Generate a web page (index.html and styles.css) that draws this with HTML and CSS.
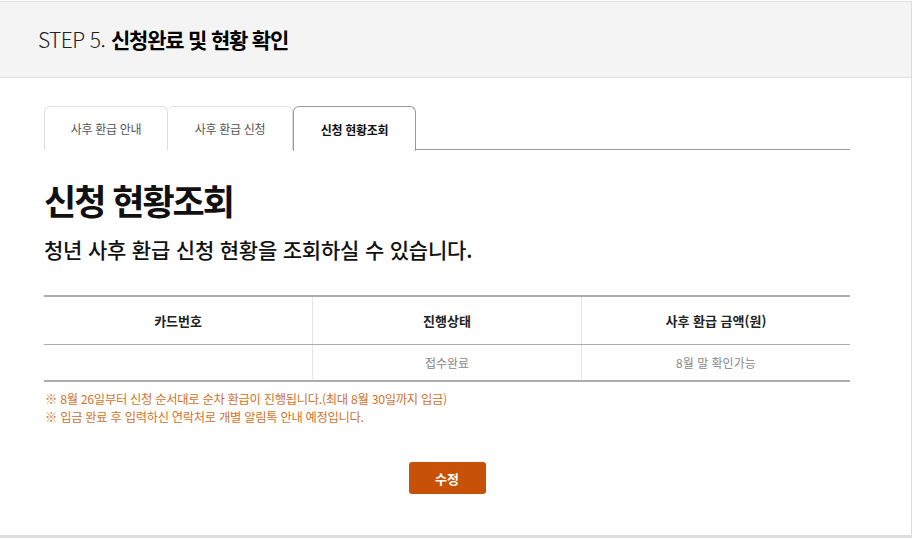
FILE: index.html
```html
<!DOCTYPE html>
<html lang="ko">
<head>
<meta charset="utf-8">
<title>STEP 5. 신청완료 및 현황 확인</title>
<link rel="stylesheet" href="styles.css">
</head>
<body>
<div class="page">
  <header class="step-header">
    <h1 class="step-title"><span class="step-no">STEP 5.</span> <strong>신청완료 및 현황 확인</strong></h1>
  </header>
  <main class="content">
    <nav class="tabs">
      <a class="tab">사후 환급 안내</a>
      <a class="tab">사후 환급 신청</a>
      <a class="tab active">신청 현황조회</a>
    </nav>
    <h2 class="title">신청 현황조회</h2>
    <p class="subtitle">청년 사후 환급 신청 현황을 조회하실 수 있습니다.</p>
    <table class="status-table">
      <thead>
        <tr><th>카드번호</th><th>진행상태</th><th>사후 환급 금액(원)</th></tr>
      </thead>
      <tbody>
        <tr><td></td><td>접수완료</td><td>8월 말 확인가능</td></tr>
      </tbody>
    </table>
    <ul class="notes">
      <li>※ 8월 26일부터 신청 순서대로 순차 환급이 진행됩니다.(최대 8월 30일까지 입금)</li>
      <li>※ 입금 완료 후 입력하신 연락처로 개별 알림톡 안내 예정입니다.</li>
    </ul>
    <div class="actions">
      <button class="btn-edit" type="button">수정</button>
    </div>
  </main>
</div>
</body>
</html>
```
FILE: styles.css
```css
* { box-sizing: border-box; }
html, body { margin: 0; padding: 0; background: #fff; }
body {
  font-family: "Noto Sans CJK KR", "Noto Sans", sans-serif;
  color: #222;
}
.page {
  width: 912px;
  height: 537px;
  margin-top: 1px;
  border-top: 1px solid #e0e0e0;
  border-right: 1px solid #dcdcdc;
  border-bottom: 3px solid #dedede;
}
.step-header {
  height: 76px;
  background: #f4f4f4;
  border-bottom: 1px solid #dddddd;
  display: flex;
  align-items: center;
  padding-left: 38px;
}
.step-title {
  margin: 0;
  font-size: 21px;
  line-height: 1;
  font-weight: 400;
  color: #111;
}
.step-no {
  font-weight: 300;
  letter-spacing: -0.6px;
  color: #222;
}
.step-title strong {
  font-weight: 700;
  letter-spacing: -1.2px;
  color: #000;
}
.content {
  width: 806px;
  margin-left: 44px;
  padding-top: 28px;
}
.tabs {
  display: flex;
  height: 44px;
  border-bottom: 1px solid #9a9a9a;
}
.tab {
  height: 44px;
  display: flex;
  align-items: center;
  justify-content: center;
  border: 1px solid #dddddd;
  border-bottom: none;
  border-radius: 6px 6px 0 0;
  font-size: 12px;
  letter-spacing: -0.3px;
  color: #555;
  background: #fff;
}
.tab:nth-child(1) { width: 124px; }
.tab:nth-child(2) { width: 125px; border-left: none; }
.tab:nth-child(3) { width: 123px; }
.tab.active {
  height: 45px;
  margin-bottom: -1px;
  border-color: #9a9a9a;
  color: #111;
  font-weight: 700;
}
.title {
  margin: 28px 0 0;
  font-size: 35px;
  line-height: 44px;
  font-weight: 700;
  letter-spacing: -2px;
  color: #111;
}
.subtitle {
  margin: 12px 0 0;
  font-size: 21px;
  line-height: 30px;
  font-weight: 500;
  letter-spacing: -0.2px;
  color: #111;
}
.status-table {
  width: 100%;
  margin-top: 31px;
  border-collapse: collapse;
  table-layout: fixed;
  border-top: 2px solid #acacac;
  border-bottom: 2px solid #acacac;
}
.status-table th,
.status-table td {
  text-align: center;
  padding: 0;
  border-left: 1px solid #e6e6e6;
}
.status-table th:first-child,
.status-table td:first-child { border-left: none; }
.status-table th {
  height: 48px;
  font-size: 13px;
  font-weight: 700;
  color: #222;
  border-bottom: 1px solid #acacac;
}
.status-table td {
  height: 37px;
  font-size: 12px;
  color: #888;
}
.notes {
  list-style: none;
  margin: 8px 0 0;
  padding: 0 0 0 1px;
  font-size: 12.3px;
  line-height: 18px;
  letter-spacing: -0.3px;
  color: #d0722c;
}
.actions {
  display: flex;
  justify-content: center;
  margin-top: 36px;
}
.btn-edit {
  width: 77px;
  height: 32px;
  border: none;
  border-radius: 3px;
  background: #c85108;
  color: #fff;
  font-family: inherit;
  font-size: 13px;
  font-weight: 700;
}
```
